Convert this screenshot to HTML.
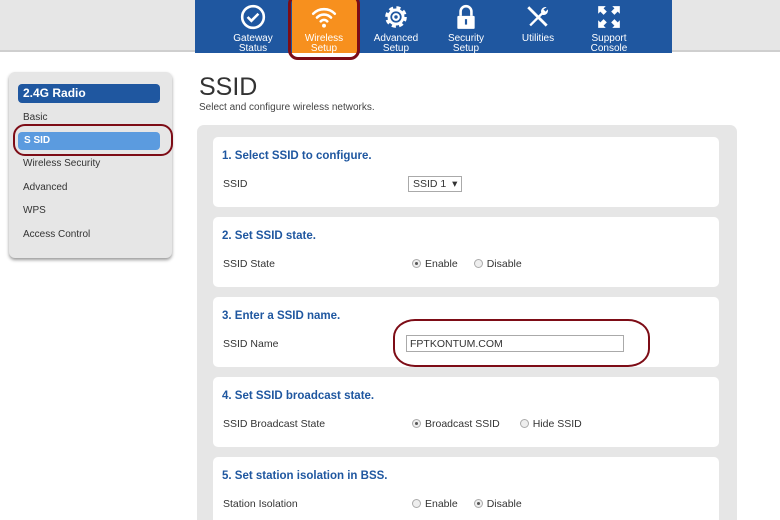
<!DOCTYPE html>
<html><head><meta charset="utf-8"><style>
*{margin:0;padding:0;box-sizing:border-box}
html,body{width:780px;height:520px;overflow:hidden}
body{background:#fff;font-family:"Liberation Sans",Arial,sans-serif;position:relative;color:#333}
.top{position:absolute;left:0;top:0;width:780px;height:52px;background:#e6e6e6;border-bottom:2px solid #cfcfcf}
.nav{position:absolute;left:195px;top:0;width:477px;height:53px;background:#1f57a0}
.tile{position:absolute;left:292px;top:0;width:66px;height:53px;background:#f7901e}
.ring{position:absolute;left:288px;top:-6px;width:72px;height:66px;border:3px solid #7d0c16;border-radius:10px}
.it{position:absolute;top:0;width:70px;text-align:center;color:#fff;font-size:10px;line-height:10px}
.it svg{display:block;margin:4px auto 4px;width:26px;height:26px}
.side{position:absolute;left:9px;top:72px;width:163px;height:186px;background:#e6e6e6;border-radius:6px;box-shadow:0 2px 3px #999}
.hd{position:absolute;left:18px;top:84px;width:142px;height:19px;background:#1f57a0;border-radius:4px;color:#fff;font-weight:bold;font-size:12px;line-height:19px;padding-left:5px}
.sel{position:absolute;left:18px;top:132px;width:142px;height:18px;background:#5b9bdf;border-radius:4px;color:#fff;font-weight:bold;font-size:10px;line-height:18px;padding-left:6px}
.si{position:absolute;left:23px;font-size:10px;color:#333}
.sring{position:absolute;left:13px;top:124px;width:160px;height:32px;border:2px solid #7d0c16;border-radius:12px}
h1{position:absolute;left:199px;top:73px;font-size:25px;font-weight:normal;color:#333}
.sub{position:absolute;left:199px;top:102px;font-size:10px;color:#444}
.panel{position:absolute;left:197px;top:125px;width:540px;height:395px;background:#e6e6e6;border-radius:7px 7px 0 0}
.card{position:absolute;left:213px;width:506px;height:70px;background:#fff;border-radius:5px}
.ct{position:absolute;left:9px;top:13px;font-size:11.5px;font-weight:bold;color:#1f57a0}
.lb{position:absolute;left:10px;top:41px;font-size:10.5px;color:#333}
.ctl{position:absolute;left:199px;top:41px;font-size:10.5px;color:#333;white-space:nowrap}
.rd{display:inline-block;width:9px;height:9px;border-radius:50%;border:1px solid #aaa;background:#eee;vertical-align:-1px;margin-right:4px;position:relative}
.rd.on:after{content:"";position:absolute;left:2px;top:2px;width:3px;height:3px;border-radius:50%;background:#555}
.g{display:inline-block;width:16px}
</style></head><body>
<div class="top"></div>
<div class="nav"></div>
<div class="tile"></div>
<div class="it" style="left:218px"><svg viewBox="0 0 24 24"><circle cx="12" cy="12" r="10" fill="none" stroke="#fff" stroke-width="2.4"/><path d="M7 12l3.5 3.5L17 9" fill="none" stroke="#fff" stroke-width="2.4"/></svg>Gateway<br>Status</div>
<div class="it" style="left:289px"><svg viewBox="0 0 24 24"><path d="M2 9a14 14 0 0 1 20 0M5.5 12.5a9 9 0 0 1 13 0M9 16a4 4 0 0 1 6 0" fill="none" stroke="#fff" stroke-width="2.4" stroke-linecap="round"/><circle cx="12" cy="20" r="1.8" fill="#fff"/></svg>Wireless<br>Setup</div>
<div class="it" style="left:361px"><svg viewBox="0 0 24 24"><circle cx="12" cy="12" r="8" fill="none" stroke="#fff" stroke-width="4" stroke-dasharray="3.5 2.8"/><circle cx="12" cy="12" r="6.5" fill="none" stroke="#fff" stroke-width="2.6"/><circle cx="12" cy="12" r="2.6" fill="none" stroke="#fff" stroke-width="2"/></svg>Advanced<br>Setup</div>
<div class="it" style="left:431px"><svg viewBox="0 0 24 24"><path d="M7 11V7a5 5 0 0 1 10 0v4" fill="none" stroke="#fff" stroke-width="2.4"/><rect x="4" y="11" width="16" height="12" rx="1" fill="#fff"/><rect x="11" y="14" width="2" height="5" fill="#1f57a0"/></svg>Security<br>Setup</div>
<div class="it" style="left:503px"><svg viewBox="0 0 24 24"><path d="M3 3l12 12M14 14l6 6" stroke="#fff" stroke-width="2.6"/><path d="M20 3a4 4 0 0 0-5 5L4 19l1.5 1.5L16 10a4 4 0 0 0 5-5l-2 2-2-2z" fill="#fff"/></svg>Utilities</div>
<div class="it" style="left:574px"><svg viewBox="0 0 24 24" fill="#fff"><path d="M2 2h7l-2 2 3 3-3 3-3-3-2 2zM22 2v7l-2-2-3 3-3-3 3-3-2-2zM2 22v-7l2 2 3-3 3 3-3 3 2 2zM22 22h-7l2-2-3-3 3-3 3 3 2-2z"/></svg>Support<br>Console</div>
<div class="ring"></div>

<div class="side"></div>
<div class="hd">2.4G Radio</div>
<div class="si" style="top:112px">Basic</div>
<div class="sel">S SID</div>
<div class="si" style="top:158px">Wireless Security</div>
<div class="si" style="top:182px">Advanced</div>
<div class="si" style="top:205px">WPS</div>
<div class="si" style="top:229px">Access Control</div>
<div class="sring"></div>

<h1>SSID</h1>
<div class="sub">Select and configure wireless networks.</div>
<div class="panel"></div>

<div class="card" style="top:137px"><div class="ct">1. Select SSID to configure.</div><div class="lb">SSID</div>
<div class="ctl" style="top:39px;left:195px;border:1px solid #aaa;padding:1px 4px;font-size:10.5px">SSID 1 &nbsp;▾</div></div>
<div class="card" style="top:217px"><div class="ct">2. Set SSID state.</div><div class="lb">SSID State</div>
<div class="ctl"><span class="rd on"></span>Enable<span class="g"></span><span class="rd"></span>Disable</div></div>
<div class="card" style="top:297px"><div class="ct">3. Enter a SSID name.</div><div class="lb">SSID Name</div>
<div class="ctl" style="top:38px;left:193px;width:218px;height:17px;border:1px solid #aaa;padding:2px 3px">FPTKONTUM.COM</div></div>
<div style="position:absolute;left:393px;top:319px;width:257px;height:48px;border:2px solid #7d0c16;border-radius:22px/18px"></div>
<div class="card" style="top:377px"><div class="ct">4. Set SSID broadcast state.</div><div class="lb">SSID Broadcast State</div>
<div class="ctl"><span class="rd on"></span>Broadcast SSID<span class="g" style="width:20px"></span><span class="rd"></span>Hide SSID</div></div>
<div class="card" style="top:457px;height:63px;border-radius:5px 5px 0 0"><div class="ct">5. Set station isolation in BSS.</div><div class="lb">Station Isolation</div>
<div class="ctl"><span class="rd"></span>Enable<span class="g"></span><span class="rd on"></span>Disable</div></div>
</body></html>
